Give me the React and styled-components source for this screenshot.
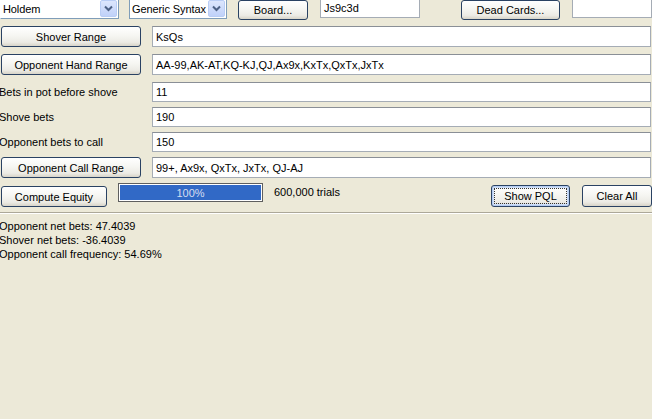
import React from "react";
import styled, { createGlobalStyle } from "styled-components";

const Global = createGlobalStyle`
  html, body { margin: 0; padding: 0; background: #ece9d8; }
  body { font-family: "Liberation Sans", Arial, sans-serif; font-size: 11px; color: #000; overflow: hidden; }
  #root { width: 652px; height: 419px; overflow: hidden; }
`;

const Page = styled.div`
  width: 652px;
  height: 419px;
  background: #ece9d8;
  display: flex;
  flex-direction: column;
`;

const TopBar = styled.div`
  display: flex;
  align-items: flex-start;
  height: 21px;
  margin-top: -2px;
`;

const Row = styled.div`
  display: grid;
  grid-template-columns: 140px 1fr;
  column-gap: 11px;
  align-items: center;
  height: ${(p) => p.$h}px;
  margin-top: ${(p) => p.$mt}px;
  padding-left: 1px;
  padding-right: 1px;
`;

const Combo = styled.div`
  box-sizing: border-box;
  width: ${(p) => p.$w}px;
  margin-left: ${(p) => p.$ml || 0}px;
  height: 21px;
  border: 1px solid #7f9db9;
  border-left-color: ${(p) => (p.$first ? "transparent" : "#7f9db9")};
  background: #fff;
  display: flex;
  align-items: center;
  gap: 2px;
  padding: 1px 1px 1px 2px;
`;

const ComboText = styled.span`
  flex: 1;
  padding-top: 1px;
  white-space: nowrap;
  overflow: hidden;
  letter-spacing: -0.1px;
`;

const ArrowBtn = styled.span`
  box-sizing: border-box;
  flex: none;
  width: 17px;
  height: 17px;
  border-radius: 2px;
  border: 1px solid #b9cdf5;
  background: linear-gradient(#dce6fd, #c0d1f9);
  display: flex;
  align-items: center;
  justify-content: center;
`;

const Button = styled.button`
  box-sizing: border-box;
  font-family: inherit;
  font-size: 11px;
  color: #000;
  width: ${(p) => (p.$w ? `${p.$w}px` : "100%")};
  margin-left: ${(p) => p.$ml || 0}px;
  margin-top: ${(p) => p.$mt || 0}px;
  height: ${(p) => p.$h || 21}px;
  padding: 0;
  border: 1px solid #2a4263;
  border-radius: 3px;
  background: linear-gradient(#ffffff 0%, #f6f6f2 45%, #ecebe5 80%, #d8d4c8 100%);
  position: relative;
  white-space: nowrap;
  box-shadow: ${(p) => (p.$default ? "inset 0 0 0 1px #b6cdf2, inset 0 0 0 2px #cfdff8" : "none")};
  &::after {
    content: "";
    display: ${(p) => (p.$default ? "block" : "none")};
    position: absolute;
    inset: 2px;
    border: 1px dotted #333;
  }
`;

const Field = styled.div`
  box-sizing: border-box;
  width: ${(p) => (p.$w ? `${p.$w}px` : "100%")};
  margin-left: ${(p) => p.$ml || 0}px;
  height: ${(p) => p.$h || 20}px;
  background: #fff;
  border: 1px solid #a5acb5;
  border-top-color: #8a8f96;
  display: flex;
  align-items: center;
  padding-left: 3px;
  white-space: nowrap;
  overflow: hidden;
`;

const Label = styled.div`
  margin-left: -2px;
  white-space: nowrap;
`;

const ComputeRow = styled.div`
  display: flex;
  align-items: flex-start;
  height: 23px;
  margin-top: 6px;
  padding-left: 1px;
`;

const Progress = styled.div`
  box-sizing: border-box;
  width: 145px;
  height: 19px;
  margin-left: 11px;
  margin-top: -1px;
  border: 1px solid #5f5f5f;
  background: #fff;
  padding: 1px;
  display: flex;
`;

const ProgressFill = styled.div`
  flex: 1;
  background: #3169c6;
  color: #d6def0;
  display: flex;
  align-items: center;
  justify-content: center;
`;

const Trials = styled.div`
  margin-left: 11px;
  margin-top: 1px;
  line-height: 14px;
`;

const Spacer = styled.div`
  flex: 1;
`;

const Separator = styled.div`
  margin-top: 5px;
  height: 1px;
  background: #aca899;
  border-bottom: 1px solid #fff;
`;

const Results = styled.div`
  margin-top: 5px;
  margin-left: -1px;
  line-height: 14px;
`;

const Chevron = () => (
  <svg width="9" height="7" viewBox="0 0 9 7">
    <path d="M1 1.5 L4.5 5 L8 1.5" fill="none" stroke="#4d6185" strokeWidth="2" />
  </svg>
);

export default function App() {
  return (
    <Page>
      <Global />
      <TopBar>
        <Combo $w={119} $first>
          <ComboText>Holdem</ComboText>
          <ArrowBtn><Chevron /></ArrowBtn>
        </Combo>
        <Combo $w={98} $ml={10}>
          <ComboText>Generic Syntax</ComboText>
          <ArrowBtn><Chevron /></ArrowBtn>
        </Combo>
        <Button $w={70} $ml={11} $mt={2} $h={20}>Board...</Button>
        <Field $w={100} $ml={12} $h={20}>Js9c3d</Field>
        <Button $w={99} $ml={41} $mt={2} $h={20}>Dead Cards...</Button>
        <Field $w={80} $ml={12} $h={20} />
      </TopBar>

      <Row $h={21} $mt={7}>
        <Button>Shover Range</Button>
        <Field $h={21}>KsQs</Field>
      </Row>
      <Row $h={21} $mt={7}>
        <Button>Opponent Hand Range</Button>
        <Field $h={21}>AA-99,AK-AT,KQ-KJ,QJ,Ax9x,KxTx,QxTx,JxTx</Field>
      </Row>
      <Row $h={20} $mt={7}>
        <Label>Bets in pot before shove</Label>
        <Field>11</Field>
      </Row>
      <Row $h={20} $mt={5}>
        <Label>Shove bets</Label>
        <Field>190</Field>
      </Row>
      <Row $h={20} $mt={5}>
        <Label>Opponent bets to call</Label>
        <Field>150</Field>
      </Row>
      <Row $h={21} $mt={5}>
        <Button>Opponent Call Range</Button>
        <Field $h={21}>99+, Ax9x, QxTx, JxTx, QJ-AJ</Field>
      </Row>

      <ComputeRow>
        <Button $w={106} $mt={2}>Compute Equity</Button>
        <Progress>
          <ProgressFill>100%</ProgressFill>
        </Progress>
        <Trials>600,000 trials</Trials>
        <Spacer />
        <Button $w={79} $mt={1} $h={22} $default>Show PQL</Button>
        <Button $w={70} $ml={12} $mt={1} $h={22}>Clear All</Button>
      </ComputeRow>

      <Separator />

      <Results>
        <div>Opponent net bets: 47.4039</div>
        <div>Shover net bets: -36.4039</div>
        <div>Opponent call frequency: 54.69%</div>
      </Results>
    </Page>
  );
}
